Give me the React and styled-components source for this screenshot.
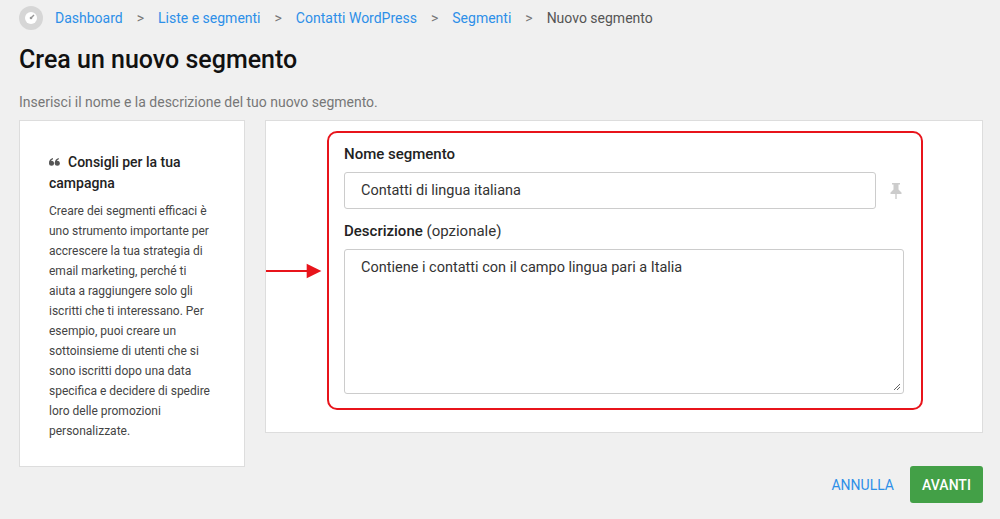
import React from "react";
import styled, { createGlobalStyle } from "styled-components";

const G = createGlobalStyle`
  body{margin:0;background:#f0f0f0;font-family:Roboto,"Liberation Sans",sans-serif;}
`;
const Page = styled.div`padding:0 17px 0 19px;`;
const Crumbs = styled.div`display:flex;align-items:center;height:36px;font-size:14px;`;
const Icon = styled.div`width:24px;height:24px;border-radius:50%;background:#d6d6d6;display:flex;align-items:center;justify-content:center;margin-right:12px;`;
const Link = styled.span`color:#2d8fe8;`;
const Sep = styled.span`color:#777;margin:0 14px;font-size:14px;`;
const Cur = styled.span`color:#555;`;
const Title = styled.h1`margin:8px 0 0;font-size:25px;font-weight:500;color:#111;line-height:32px;`;
const Sub = styled.p`margin:17px 0 0;font-size:14px;color:#777;line-height:18px;`;
const Row = styled.div`display:flex;gap:20px;margin-top:9px;align-items:flex-start;`;
const Tips = styled.div`width:226px;height:347px;box-sizing:border-box;background:#fff;border:1px solid #ddd;padding:31px 32px 0 29px;`;
const TipH = styled.div`font-size:14px;font-weight:500;color:#222;line-height:21px;margin-bottom:7px;`;
const Q = styled.svg`margin-right:8px;vertical-align:1px;`;
const TipP = styled.div`font-size:12px;color:#444;line-height:20px;`;
const Main = styled.div`flex:1;height:313px;box-sizing:border-box;background:#fff;border:1px solid #ddd;padding:10px 59px 0 0;display:flex;align-items:flex-start;`;
const ArrowWrap = styled.div`width:61px;padding-top:130px;display:flex;justify-content:flex-end;padding-right:6px;box-sizing:border-box;`;
const Box = styled.div`flex:1;border:2px solid #e8141b;border-radius:10px;padding:11px 17px 14px 15px;`;
const Label = styled.div`font-size:15px;font-weight:500;color:#222;line-height:20px;margin-bottom:8px;`;
const Light = styled.span`font-weight:400;color:#333;`;
const InRow = styled.div`display:flex;align-items:center;gap:12px;margin-bottom:12px;`;
const Input = styled.div`flex:1;height:37px;box-sizing:border-box;border:1px solid #ccc;border-radius:3px;padding:0 16px;display:flex;align-items:center;font-size:14.5px;color:#333;`;
const Area = styled.div`position:relative;height:145px;box-sizing:border-box;border:1px solid #ccc;border-radius:3px;padding:9px 16px;font-size:14.5px;color:#333;`;
const Grip = styled.svg`position:absolute;right:2px;bottom:2px;`;
const Foot = styled.div`display:flex;justify-content:flex-end;align-items:center;gap:16px;margin-top:-1px;`;
const Cancel = styled.span`color:#2d8fe8;font-size:14px;`;
const Next = styled.div`background:#43a047;color:#fff;font-size:14px;font-weight:500;height:37px;width:73px;border-radius:3px;display:flex;align-items:center;justify-content:center;`;

export default function App(){
  return <><G/><Page>
    <Crumbs>
      <Icon><svg width="14" height="14" viewBox="0 0 14 14"><circle cx="7" cy="7" r="6" fill="#fff"/><path d="M7 7 L10 4" stroke="#999" strokeWidth="1.5"/><circle cx="7" cy="7" r="1.3" fill="#999"/></svg></Icon>
      <Link>Dashboard</Link><Sep>&gt;</Sep><Link>Liste e segmenti</Link><Sep>&gt;</Sep><Link>Contatti WordPress</Link><Sep>&gt;</Sep><Link>Segmenti</Link><Sep>&gt;</Sep><Cur>Nuovo segmento</Cur>
    </Crumbs>
    <Title>Crea un nuovo segmento</Title>
    <Sub>Inserisci il nome e la descrizione del tuo nuovo segmento.</Sub>
    <Row>
      <Tips>
        <TipH><Q width="11" height="8" viewBox="0 0 11 8"><circle cx="2.5" cy="5.2" r="2.5" fill="#555"/><path d="M0 5 Q0 1 4 0 L4 1.3 Q1.8 2 1.8 4Z" fill="#555"/><circle cx="8.3" cy="5.2" r="2.5" fill="#555"/><path d="M5.8 5 Q5.8 1 9.8 0 L9.8 1.3 Q7.6 2 7.6 4Z" fill="#555"/></Q>Consigli per la tua campagna</TipH>
        <TipP>Creare dei segmenti efficaci è uno strumento importante per accrescere la tua strategia di email marketing, perché ti aiuta a raggiungere solo gli iscritti che ti interessano. Per esempio, puoi creare un sottoinsieme di utenti che si sono iscritti dopo una data specifica e decidere di spedire loro delle promozioni personalizzate.</TipP>
      </Tips>
      <Main>
        <ArrowWrap><svg width="70" height="20" viewBox="0 0 70 20" style={{marginRight:-2}}><path d="M0 10 H52" stroke="#e8141b" strokeWidth="2.5"/><path d="M50 1 L68 10 L50 19 Z" fill="#e8141b"/></svg></ArrowWrap>
        <Box>
          <Label>Nome segmento</Label>
          <InRow>
            <Input>Contatti di lingua italiana</Input>
            <svg width="16" height="18" viewBox="0 0 16 18"><path d="M4 1h8v1.5h-1.5v5l3 3v1.5H2.5V10.5l3-3v-5H4z M7.3 12h1.4v5h-1.4z" fill="#ccc"/></svg>
          </InRow>
          <Label>Descrizione <Light>(opzionale)</Light></Label>
          <Area>Contiene i contatti con il campo lingua pari a Italia
            <Grip width="8" height="8" viewBox="0 0 8 8"><path d="M7 1L1 7M7 4L4 7" stroke="#666"/></Grip>
          </Area>
        </Box>
      </Main>
    </Row>
    <Foot><Cancel>ANNULLA</Cancel><Next>AVANTI</Next></Foot>
  </Page></>;
}
